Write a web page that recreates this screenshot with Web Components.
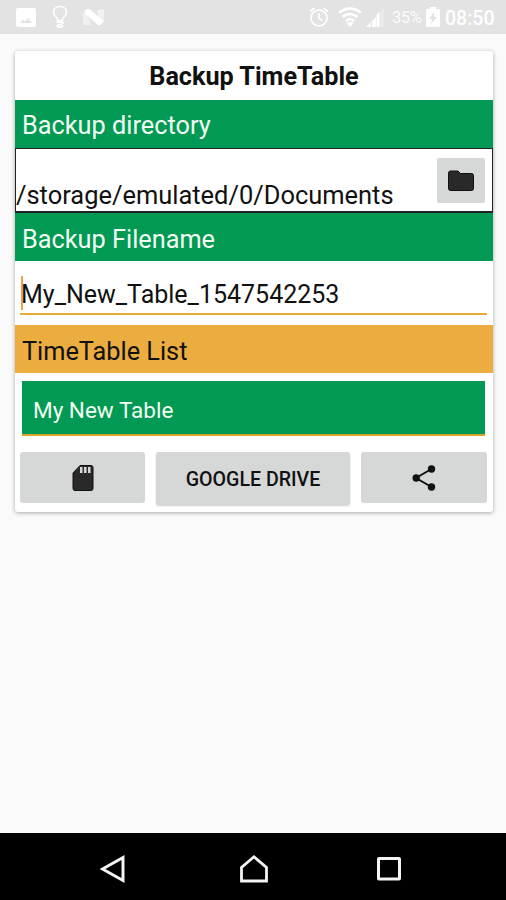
<!DOCTYPE html>
<html lang="en">
<head>
<meta charset="utf-8">
<title>Backup TimeTable</title>
<style>
html,body{margin:0;height:100%;background:#fafafa}
body{font-family:Roboto,"Liberation Sans",sans-serif;color:#111}
</style>
</head>
<body>
<backup-screen></backup-screen>
<script>
const define = (name, html) => {
  const t = document.createElement('template');
  t.innerHTML = html;
  customElements.define(name, class extends HTMLElement {
    constructor() {
      super();
      this.attachShadow({mode: 'open'}).append(t.content.cloneNode(true));
    }
  });
};

define('status-bar', `
<style>
:host{display:flex;height:34px;box-sizing:border-box;background:#e3e3e3;color:#fff;padding:0 11px 0 16px;align-items:center}
svg{display:block;flex:none}
.l,.r{display:flex;align-items:center;height:34px}
.r{margin-left:auto}
.pct{font-size:16.5px;letter-spacing:-.4px;width:30px;margin-left:6px;white-space:nowrap;opacity:.85;line-height:34px;padding-top:2px}
.time{font-size:19.5px;font-weight:500;line-height:34px;width:50px;white-space:nowrap;margin-left:5px;padding-top:3px}
</style>
<div class="l">
<svg width="20" height="34" viewBox="0 0 20 34"><path fill="#fff" fill-rule="evenodd" d="M2 8h16q2 0 2 2v15q0 2-2 2H2q-2 0-2-2V10q0-2 2-2zM4 23h12l-4-5-3 3.5-2-2z"/></svg>
<svg width="16" height="34" viewBox="0 0 16 34" style="margin-left:16px" fill="none" stroke="#fff" stroke-width="1.6"><path d="M5.5 20.5v-2.2C3 16.500 1.500 15 1.500 12a6.500 5.500 0 0 1 13 0c0 3-1.500 4.500-4 6.300v2.200zM5 23c0-1.500 6-1.500 6 0s-6 1.500-6 3 5.500 1.500 6-.5"/></svg>
<svg width="22" height="34" viewBox="0 0 22 34" style="margin-left:15px"><path fill="#fff" opacity=".5" d="M0 14l3-4 5 15H1q-1 0-1-1zM14 10l7-1v13l-5 3z"/><path fill="#fff" d="M1.500 11q3-3.500 6-1.200L20.500 21q-2 5-5.500 4L3 14.500z"/></svg>
</div>
<div class="r">
<svg width="20" height="34" viewBox="0 0 20 34" fill="none" stroke="#fff" stroke-width="1.700"><circle cx="10" cy="18" r="8"/><path d="M10 13v5.500l3.500 2M1 11.500l4.500-3.700M19 11.500l-4.500-3.700"/></svg>
<svg width="24" height="34" viewBox="0 0 24 34" style="margin-left:9px" fill="none" stroke="#fff" stroke-width="2.600"><path d="M1 12.500q11-8 22 0M4.500 17q7.500-6 15 0M8 21q4-3.500 8 0"/><path fill="#fff" stroke="none" d="M8.500 23q3.500-2 7 0L12 27z"/></svg>
<svg width="18" height="34" viewBox="0 0 18 34" style="margin:0 2px 0 4px" fill="#fff"><path d="M0 27l5-5v5zM6 21l4-4v10H6zM10.500 15l3-3v15h-3z"/><path opacity=".25" d="M14 12l4-4v19h-4z"/></svg>
<div class="pct">35%</div>
<svg width="14" height="34" viewBox="0 0 14 34" style="margin-left:4px"><path fill="#fff" fill-rule="evenodd" d="M4 7h6v2h3q1 0 1 1v16q0 1-1 1H1q-1 0-1-1V10q0-1 1-1h3zM8 12l-5 7h3l-1 5 6-7H8z"/></svg>
<div class="time">08:50</div>
</div>`);

define('section-bar', `
<style>
:host{display:block;height:48px;box-sizing:border-box;background:#019953;color:#f4fff4;font-size:25.300px;line-height:51px;padding-left:7px;white-space:nowrap}
:host([low]){line-height:53px}
:host([tone=amber]){background:#ecad40;color:#111}
</style><slot></slot>`);

define('grey-button', `
<style>
:host{display:flex;align-items:center;justify-content:center;background:#d6d8d7;border-radius:3px;height:51px;font-size:19.600px;font-weight:500;color:#111;white-space:nowrap}
:host([raised]){height:53px;box-shadow:0 1px 2px #0003;box-sizing:border-box;padding-top:1px}
::slotted(svg){display:block}
</style><slot></slot>`);

define('directory-row', `
<style>
:host{display:flex;height:65px;box-sizing:border-box;border:1px solid #222;border-bottom-width:2px;justify-content:space-between;padding-right:7px}
span{align-self:flex-end;font-size:25.450px;line-height:31px;white-space:nowrap}
grey-button{width:48px;height:45px;margin-top:9px;border-radius:2px}
</style><span><slot></slot></span>
<grey-button><svg width="26" height="22" viewBox="0 0 26 22"><path fill="#292929" stroke="#111" d="M2.500 1h7.500l2.500 2.500h11q2 0 2 2v13q0 2-2 2h-21q-2 0-2-2V3q0-2 2-2z"/></svg></grey-button>`);

define('name-field', `
<style>
:host{display:flex;flex-direction:column;height:64px;box-sizing:border-box;padding:15px 6px 0 5px}
.t{display:flex;align-items:flex-start;height:37px;border-bottom:2px solid #e8a93c;font-size:25px;line-height:37px;white-space:nowrap}
i{width:2px;height:34px;background:#e8a550;margin-right:-2px;margin-left:1px}
</style><div class="t"><i></i><span><slot></slot></span></div>`);

define('table-item', `
<style>
:host{display:block;margin:8px 8px 0 7px;height:55px;box-sizing:border-box;background:#019953;border-bottom:2px solid #d9a52b;color:#f4fff4;font-size:22.500px;line-height:59px;padding-left:11px;white-space:nowrap}
</style><slot></slot>`);

define('backup-card', `
<style>
:host{display:flex;flex-direction:column;margin:17px 13px 0 15px;width:478px;height:461px;background:#fff;border-radius:3px;box-shadow:0 1px 4px #0005}
h1{margin:0;height:49px;line-height:52px;font-size:25.200px;font-weight:700;text-align:center}
.b{display:grid;grid-template-columns:125px 194px 126px;gap:11px;padding:16px 0 0 5px;align-items:start}
</style>
<h1><span>Backup TimeTable</span></h1>
<section-bar>Backup directory</section-bar>
<directory-row>/storage/emulated/0/Documents</directory-row>
<section-bar low>Backup Filename</section-bar>
<name-field>My_New_Table_1547542253</name-field>
<section-bar low tone="amber">TimeTable List</section-bar>
<table-item>My New Table</table-item>
<div class="b">
<grey-button><svg width="22" height="28" viewBox="0 0 22 28"><path fill="#292929" stroke="#111" d="M8 1.500h11q2 0 2 2v21q0 2-2 2H3q-2 0-2-2V9z"/><path fill="#d6d8d7" d="M8 3h2.500v6H8zM12 3h2.500v6H12zM16 3h2.500v6H16z"/></svg></grey-button>
<grey-button raised>GOOGLE DRIVE</grey-button>
<grey-button><svg width="24" height="26" viewBox="0 0 24 26"><path fill="none" stroke="#111" stroke-width="2" d="M19.500 4L4 13l15.500 9"/><g fill="#111"><circle cx="19.500" cy="4" r="3.700"/><circle cx="4.200" cy="13" r="3.700"/><circle cx="19.500" cy="22" r="3.700"/></g></svg></grey-button>
</div>`);

define('nav-bar', `
<style>
:host{display:flex;height:67px;background:#000;margin-top:auto;justify-content:space-between;padding:4px 104px 0 100px;align-items:center}
svg{display:block}
</style>
<svg width="26" height="30" viewBox="0 0 26 30"><path fill="none" stroke="#f4f4f4" stroke-width="3" d="M23 3.500v23L2.500 15z"/></svg>
<svg width="30" height="30" viewBox="0 0 30 30" style="margin-left:5px"><path fill="none" stroke="#f4f4f4" stroke-width="2.800" d="M2.500 27V13.500L15 2.800l12.500 10.700V27z"/></svg>
<svg width="26" height="26" viewBox="0 0 26 26"><rect x="2.500" y="2.500" width="21" height="20.500" rx=".5" fill="none" stroke="#f4f4f4" stroke-width="3"/></svg>`);

define('backup-screen', `
<style>:host{display:flex;flex-direction:column;width:506px;height:900px;background:#fafafa;overflow:hidden}nav-bar{box-sizing:border-box}</style>
<status-bar></status-bar><backup-card></backup-card><nav-bar></nav-bar>`);
</script>
</body>
</html>
